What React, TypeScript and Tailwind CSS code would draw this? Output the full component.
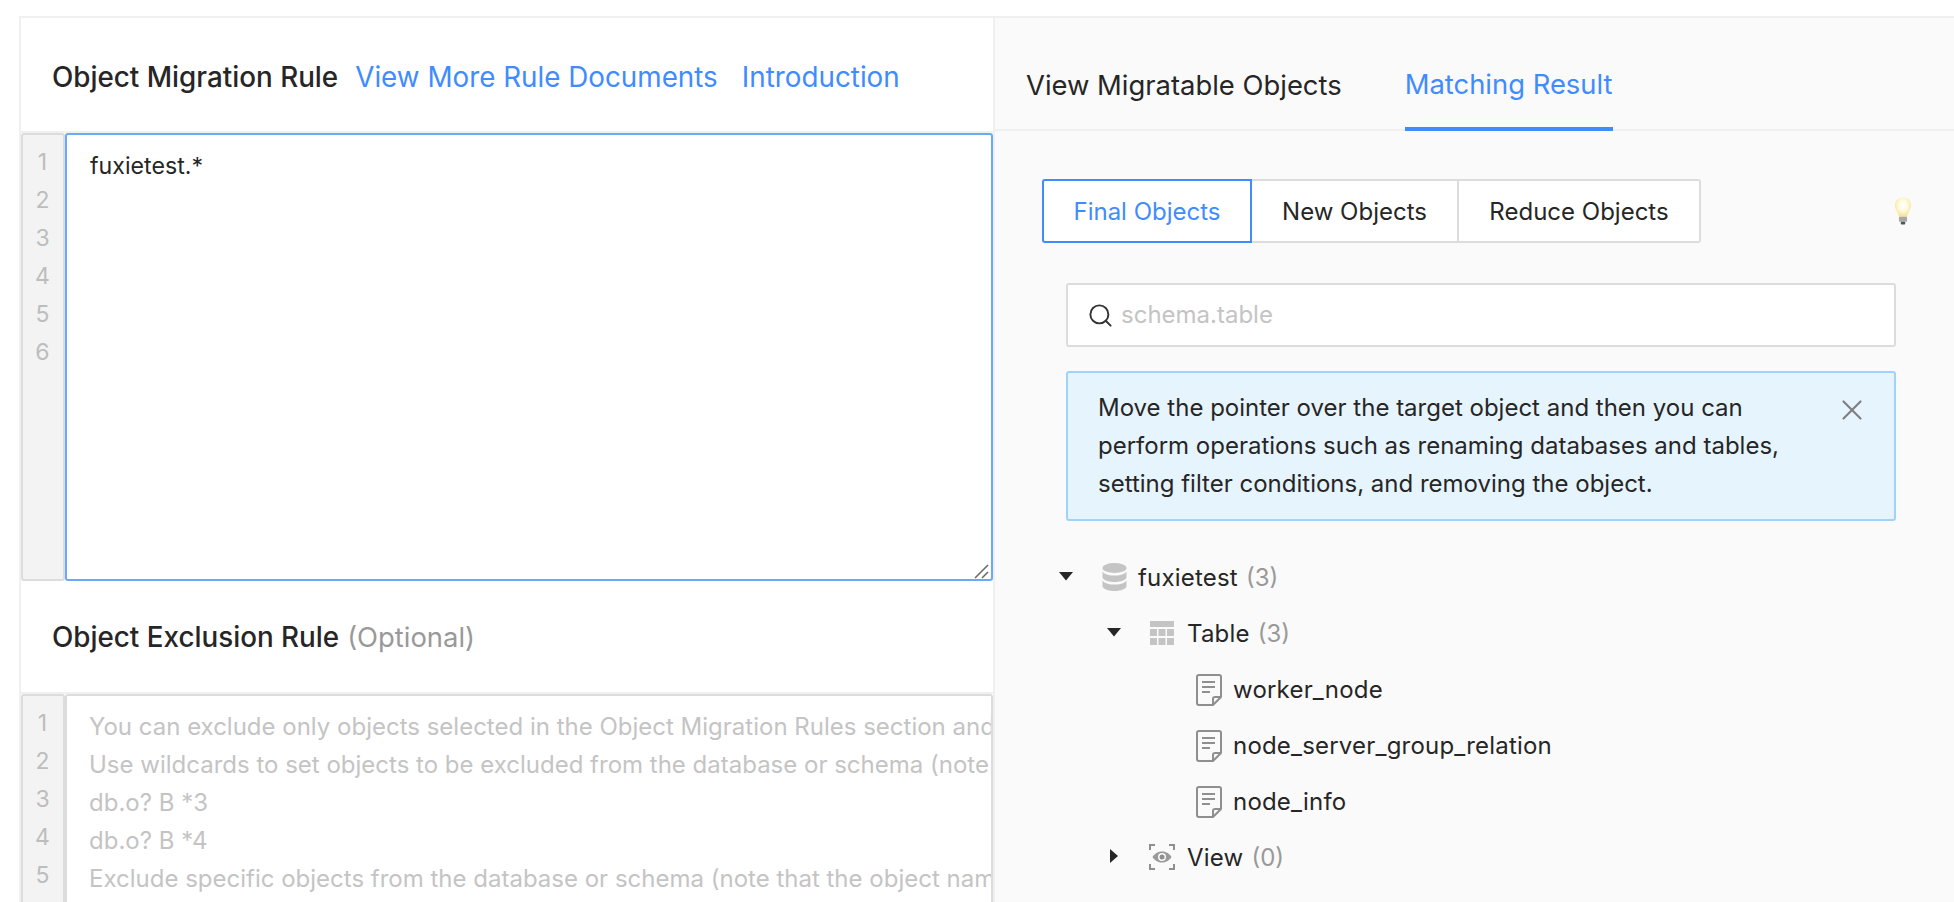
import { Search, X } from 'lucide-react';

// Object migration rule editor + matching result panel

const font = { fontFamily: 'Inter, "Noto Sans", sans-serif' };

const exclusionPlaceholder = [
  'You can exclude only objects selected in the Object Migration Rules section and',
  'Use wildcards to set objects to be excluded from the database or schema (note that',
  'db.o? B *3',
  'db.o? B *4',
  'Exclude specific objects from the database or schema (note that the object names',
].join('\n');

function Gutter() {
  return (
    <div className="w-[44px] shrink-0 rounded-[3px] border-2 border-[#dcdcdc] bg-[#f3f3f3] pt-[8px] pr-[1px] text-center text-[23px] leading-[38px] text-[#bdbdbd]">
      {[1, 2, 3, 4, 5, 6].map((n) => (
        <div key={n}>{n}</div>
      ))}
    </div>
  );
}

function DbIcon() {
  return (
    <svg width="25" height="28" viewBox="0 0 24 28" fill="#c4c4c4" className="-mt-[2px]">
      <ellipse cx="12" cy="5" rx="12" ry="5" />
      <path d="M0 8.500C2 11.500 7 12.600 12 12.600S22 11.500 24 8.500V14c0 2.800-5.400 5-12 5S0 16.800 0 14z" />
      <path d="M0 17.500C2 20.500 7 21.600 12 21.600S22 20.500 24 17.500V23c0 2.800-5.400 5-12 5S0 25.800 0 23z" />
    </svg>
  );
}

function TableIcon() {
  return (
    <svg width="24" height="24" viewBox="0 0 24 24" fill="#c4c4c4" className="-mt-[2px]">
      <rect x="0" y="0" width="24" height="6" />
      <rect x="0" y="8" width="7" height="7" />
      <rect x="8.500" y="8" width="7" height="7" />
      <rect x="17" y="8" width="7" height="7" />
      <rect x="0" y="17" width="7" height="7" />
      <rect x="8.500" y="17" width="7" height="7" />
      <rect x="17" y="17" width="7" height="7" />
    </svg>
  );
}

function DocIcon() {
  return (
    <svg width="26" height="32" viewBox="0 0 26 32" fill="none" stroke="#8f8f8f" strokeWidth="2">
      <path d="M17 31H3a2 2 0 0 1-2-2V3a2 2 0 0 1 2-2h20a2 2 0 0 1 2 2v20z" strokeLinejoin="round" />
      <path d="M25 23h-6a2 2 0 0 0-2 2v6" strokeLinejoin="round" />
      <path d="M6 8h13M6 13h13M6 18h8" />
    </svg>
  );
}

function ViewIcon() {
  return (
    <svg width="26" height="26" viewBox="0 0 26 26" fill="none" className="-mt-[2px]">
      <path d="M1 6V1h5M20 1h5v5M25 20v5h-5M6 25H1v-5" stroke="#8f8f8f" strokeWidth="2" />
      <path d="M3.500 13C6 9 9.500 7.500 13 7.500S20 9 22.500 13C20 17 16.500 18.500 13 18.500S6 17 3.500 13z" fill="#9a9a9a" />
      <circle cx="13" cy="13" r="4" fill="#fafafa" />
      <circle cx="13" cy="13" r="2.500" fill="#8f8f8f" />
    </svg>
  );
}

function Bulb() {
  return (
    <svg width="18" height="30" viewBox="0 0 20 32">
      <defs>
        <radialGradient id="bulbGlow" cx="50%" cy="40%" r="60%">
          <stop offset="0%" stopColor="#ffffff" />
          <stop offset="45%" stopColor="#fffbe0" />
          <stop offset="100%" stopColor="#f8e08c" />
        </radialGradient>
      </defs>
      <path d="M10 1C4.500 1 1 5 1 9.500c0 4.500 3.500 7 4.500 13h9C15.500 16.500 19 14 19 9.500 19 5 15.500 1 10 1z" fill="url(#bulbGlow)" />
      <rect x="5.500" y="22.500" width="9" height="5.500" rx="1" fill="#a9a9a9" />
      <rect x="7.500" y="28" width="5" height="3" rx="1" fill="#555555" />
    </svg>
  );
}

function Caret({ open }: { open: boolean }) {
  if (open) {
    return (
      <svg width="14" height="10" viewBox="0 0 14 10" fill="#262626">
        <path d="M0 1h14L7 9.500z" />
      </svg>
    );
  }
  return (
    <svg width="10" height="14" viewBox="0 0 10 14" fill="#262626">
      <path d="M1 0v14l8-7z" />
    </svg>
  );
}

function TreeRow({ indent, caret, caretWidth, iconWidth = 'w-[37px]', icon, label, count }: {
  indent: string;
  caret?: 'open' | 'closed';
  caretWidth?: string;
  iconWidth?: string;
  icon: React.ReactNode;
  label: string;
  count?: number;
}) {
  return (
    <div className={`flex h-[56px] items-center ${indent}`}>
      {caret && (
        <span className={`-mt-[5px] flex shrink-0 justify-start ${caretWidth}`}>
          <Caret open={caret === 'open'} />
        </span>
      )}
      <span className={`flex shrink-0 justify-start ${iconWidth}`}>{icon}</span>
      <span className="text-[24px] tracking-[0.2px] text-[#262626]">{label}</span>
      {count !== undefined && <span className="ml-[8px] text-[24px] text-[#999999]">({count})</span>}
    </div>
  );
}

export default function App() {
  return (
    <div className="h-[902px] w-[1954px] overflow-hidden bg-white pt-[16px] pl-[19px]" style={font}>
      <div className="flex h-[886px] border-t-2 border-[#f0f0f0]">
        {/* Left column */}
        <div className="flex w-[974px] shrink-0 flex-col border-l-2 border-[#f0f0f0]">
          <div className="flex h-[113px] shrink-0 items-center gap-[24px] pt-[6px] pl-[31px] text-[27.8px] font-medium">
            <span className="mr-[-7px] text-[#262626]">Object Migration Rule</span>
            <a className="font-normal text-[#3f8cff]">View More Rule Documents</a>
            <a className="font-normal text-[#3f8cff]">Introduction</a>
          </div>
          <div className="flex h-[450px] shrink-0 border-t-2 border-[#f0f0f0]">
            <Gutter />
            <div className="relative flex min-w-0 flex-1">
              <textarea
                readOnly
                defaultValue="fuxietest.*"
                className="min-w-0 flex-1 resize-none rounded-[3px] border-2 border-[#69a9f5] bg-white px-[23px] pt-[12px] text-[23.2px] leading-[38px] text-[#262626] outline-none"
              />
              <svg width="16" height="16" viewBox="0 0 16 16" className="absolute right-[4px] bottom-[2px]" stroke="#666666" strokeWidth="1.5">
                <path d="M2 15 15 2M9 15l6-6" />
              </svg>
            </div>
          </div>
          <div className="flex h-[111px] shrink-0 items-center pt-[2px] pl-[31px] text-[27.8px]">
            <span className="font-medium text-[#262626]">Object Exclusion Rule</span>
            <span className="ml-[8px] text-[27.4px] text-[#999999]">(Optional)</span>
          </div>
          <div className="flex h-[300px] shrink-0 border-t-2 border-[#f0f0f0]">
            <Gutter />
            <textarea
              readOnly
              wrap="off"
              placeholder={exclusionPlaceholder}
              className="min-w-0 flex-1 resize-none overflow-hidden rounded-[3px] border-2 border-[#dcdcdc] bg-white px-[22px] pt-[12px] text-[24px] leading-[38px] text-[#262626] outline-none placeholder:text-[#c4c4c4]"
            />
          </div>
        </div>

        {/* Right column */}
        <div className="min-w-0 flex-1 border-l-2 border-[#f0f0f0] bg-[#fafafa]">
          <div className="flex h-[113px] items-stretch gap-[63px] border-b-2 border-[#f0f0f0] pl-[31px] text-[27.4px]">
            <div className="flex items-center pt-[25px] text-[#262626]">View Migratable Objects</div>
            <div className="mb-[-2px] flex items-center border-b-4 border-[#3f8cff] pt-[25px] text-[#3f8cff]">Matching Result</div>
          </div>

          <div className="pt-[48px] pl-[47px] pr-[58px]">
            <div className="flex items-center justify-between">
              <div className="flex h-[64px] text-[24px] text-[#262626]">
                <div className="z-10 flex w-[210px] items-center justify-center rounded-l-[3px] border-2 border-[#3f8cff] bg-white pt-[1px] text-[#3f8cff]">Final Objects</div>
                <div className="ml-[-2px] flex w-[209px] items-center justify-center border-y-2 border-r-2 border-[#dcdcdc] bg-white pt-[1px] pl-[2px]">New Objects</div>
                <div className="flex w-[242px] items-center justify-center rounded-r-[3px] border-y-2 border-r-2 border-[#dcdcdc] bg-white pt-[1px]">Reduce Objects</div>
              </div>
              <span className="mr-[-16px] flex">
                <Bulb />
              </span>
            </div>

            <div className="ml-[24px]">
              <div className="mt-[40px] flex h-[64px] items-center gap-[7px] rounded-[3px] border-2 border-[#dcdcdc] bg-white pl-[19px] text-[24px] text-[#c4c4c4]">
                <Search size={27} strokeWidth={1.7} className="text-[#333333]" />
                <span>schema.table</span>
              </div>

              <div className="relative mt-[24px] h-[150px] rounded-[3px] border-2 border-[#9fd3fb] bg-[#e6f4fe] py-[16px] pl-[30px] pr-[60px] text-[24px] leading-[38px] text-[#262626]">
                <p>Move the pointer over the target object and then you can perform operations such as renaming databases and tables, setting filter conditions, and removing the object.</p>
                <X size={34} strokeWidth={1.5} className="absolute top-[20px] right-[25px] text-[#7f7f7f]" />
              </div>

              <div className="mt-[29px]">
                <TreeRow indent="-ml-[7px]" caret="open" caretWidth="w-[43px]" iconWidth="w-[36px]" icon={<DbIcon />} label="fuxietest" count={3} />
                <TreeRow indent="ml-[41px]" caret="open" caretWidth="w-[43px]" icon={<TableIcon />} label="Table" count={3} />
                <TreeRow indent="ml-[130px]" icon={<DocIcon />} label="worker_node" />
                <TreeRow indent="ml-[130px]" icon={<DocIcon />} label="node_server_group_relation" />
                <TreeRow indent="ml-[130px]" icon={<DocIcon />} label="node_info" />
                <TreeRow indent="ml-[43px]" caret="closed" caretWidth="w-[40px]" iconWidth="w-[38px]" icon={<ViewIcon />} label="View" count={0} />
              </div>
            </div>
          </div>
        </div>
      </div>
    </div>
  );
}
